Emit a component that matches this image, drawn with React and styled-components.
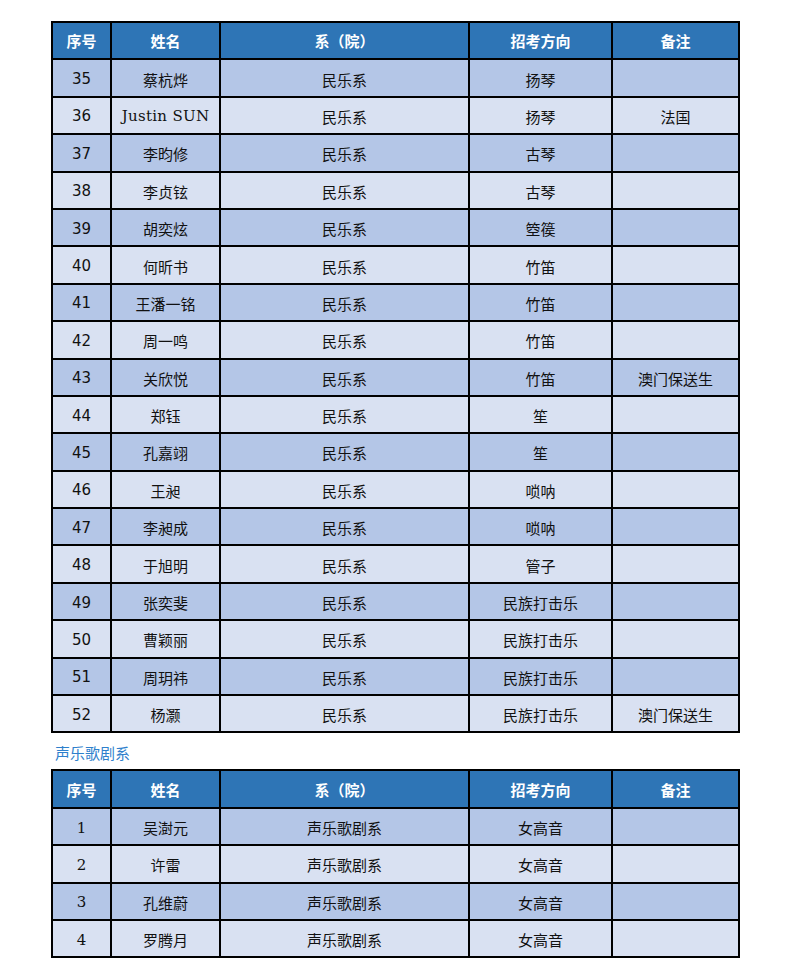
import React from "react";
import styled, { createGlobalStyle } from "styled-components";

const GlobalStyle = createGlobalStyle`
  html, body {
    margin: 0;
    padding: 0;
    background: #ffffff;
  }
  body {
    font-family: "DejaVu Serif", "Noto Sans CJK SC", serif;
  }
`;

const cols = [59, 109, 249, 143, 127];
const headers = ["序号", "姓名", "系（院）", "招考方向", "备注"];

const folk = [
  ["35", "蔡杭烨", "民乐系", "扬琴", ""],
  ["36", "Justin SUN", "民乐系", "扬琴", "法国"],
  ["37", "李昀修", "民乐系", "古琴", ""],
  ["38", "李贞铉", "民乐系", "古琴", ""],
  ["39", "胡奕炫", "民乐系", "箜篌", ""],
  ["40", "何昕书", "民乐系", "竹笛", ""],
  ["41", "王潘一铭", "民乐系", "竹笛", ""],
  ["42", "周一鸣", "民乐系", "竹笛", ""],
  ["43", "关欣悦", "民乐系", "竹笛", "澳门保送生"],
  ["44", "郑钰", "民乐系", "笙", ""],
  ["45", "孔嘉翊", "民乐系", "笙", ""],
  ["46", "王昶", "民乐系", "唢呐", ""],
  ["47", "李昶成", "民乐系", "唢呐", ""],
  ["48", "于旭明", "民乐系", "管子", ""],
  ["49", "张奕斐", "民乐系", "民族打击乐", ""],
  ["50", "曹颖丽", "民乐系", "民族打击乐", ""],
  ["51", "周玥祎", "民乐系", "民族打击乐", ""],
  ["52", "杨灏", "民乐系", "民族打击乐", "澳门保送生"],
];

const vocal = [
  ["1", "吴澍元", "声乐歌剧系", "女高音", ""],
  ["2", "许雷", "声乐歌剧系", "女高音", ""],
  ["3", "孔维蔚", "声乐歌剧系", "女高音", ""],
  ["4", "罗腾月", "声乐歌剧系", "女高音", ""],
];

const Page = styled.div`
  padding: 21px 0 0 51px;
  width: 690px;
`;

const Table = styled.table`
  border-collapse: collapse;
  table-layout: fixed;
  width: 689px;
  border: 2px solid #000;
`;

const HeadCell = styled.th`
  background: #2e75b6;
  color: #ffffff;
  font-family: "Noto Sans CJK SC", sans-serif;
  font-weight: 700;
  font-size: 15px;
  height: 35.4px;
  padding: 0;
  border: 2px solid #000;
  text-align: center;
  vertical-align: middle;
`;

const Cell = styled.td`
  background: ${(p) => (p.$odd ? "#b4c6e7" : "#d9e1f2")};
  color: #111;
  font-family: ${(p) =>
    p.$sans
      ? '"DejaVu Sans", "Noto Sans CJK SC", sans-serif'
      : '"DejaVu Serif", "Noto Sans CJK SC", serif'};
  font-size: 15px;
  height: 33.4px;
  padding: 2px 0 0;
  border: 2px solid #000;
  text-align: center;
  vertical-align: middle;
  white-space: nowrap;
`;

const Latin = styled.span`
  letter-spacing: 0.3px;
`;

const SectionTitle = styled.div`
  color: #2e80cc;
  font-family: "Noto Sans CJK SC", sans-serif;
  font-size: 15px;
  height: 36px;
  line-height: 40px;
  padding-left: 4px;
`;

function Roster({ rows, sansNumbers }) {
  return (
    <Table>
      <colgroup>
        {cols.map((w, i) => (
          <col key={i} style={{ width: w }} />
        ))}
      </colgroup>
      <thead>
        <tr>
          {headers.map((h) => (
            <HeadCell key={h}>{h}</HeadCell>
          ))}
        </tr>
      </thead>
      <tbody>
        {rows.map((r, i) => (
          <tr key={r[0]}>
            {r.map((c, j) => (
              <Cell key={j} $odd={i % 2 === 0} $sans={sansNumbers && j === 0}>
                {/^[A-Za-z ]+$/.test(c) ? <Latin>{c}</Latin> : c}
              </Cell>
            ))}
          </tr>
        ))}
      </tbody>
    </Table>
  );
}

export default function App() {
  return (
    <>
      <GlobalStyle />
      <Page>
        <Roster rows={folk} sansNumbers />
        <SectionTitle>声乐歌剧系</SectionTitle>
        <Roster rows={vocal} />
      </Page>
    </>
  );
}
